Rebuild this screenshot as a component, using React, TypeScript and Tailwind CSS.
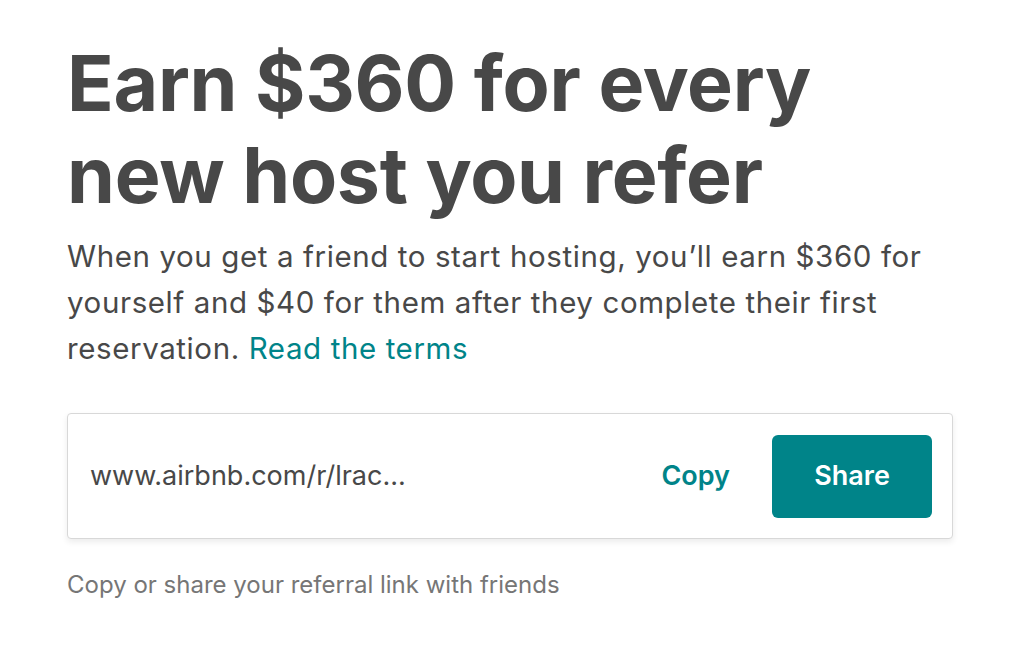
export default function App() {
  return (
    <div className="min-h-[661px] w-[1024px] bg-white font-['Inter','Noto_Sans',sans-serif] text-[#484848]">
      <div className="px-[67px] pt-[37px]">
        <h1 className="text-[77px] font-bold leading-[92px] tracking-[-0.3px]">
          Earn $360 for every
          <br />
          new host you refer
        </h1>
        <p className="mt-[12px] text-[29.5px] leading-[46px] tracking-[0.6px]">
          When you get a friend to start hosting, you’ll earn $360 for
          <br />
          yourself and $40 for them after they complete their first
          <br />
          reservation. <a className="text-[#008489]">Read the terms</a>
        </p>

        <div className="mt-[42px] flex h-[126px] w-[886px] items-center rounded-[4px] border border-[#d8d8d8] bg-white pl-[22px] pr-[20px] shadow-[0_3px_6px_rgba(0,0,0,0.08)]">
          <span className="flex-1 text-[27px] text-[#484848]">www.airbnb.com/r/lrac...</span>
          <button className="mr-[42px] text-[27px] font-semibold text-[#008489]">Copy</button>
          <button className="h-[83px] w-[160px] rounded-[6px] bg-[#008489] text-[27px] font-semibold text-white">
            Share
          </button>
        </div>

        <p className="mt-[31px] text-[24px] leading-[29px] text-[#767676]">
          Copy or share your referral link with friends
        </p>
      </div>
    </div>
  );
}
